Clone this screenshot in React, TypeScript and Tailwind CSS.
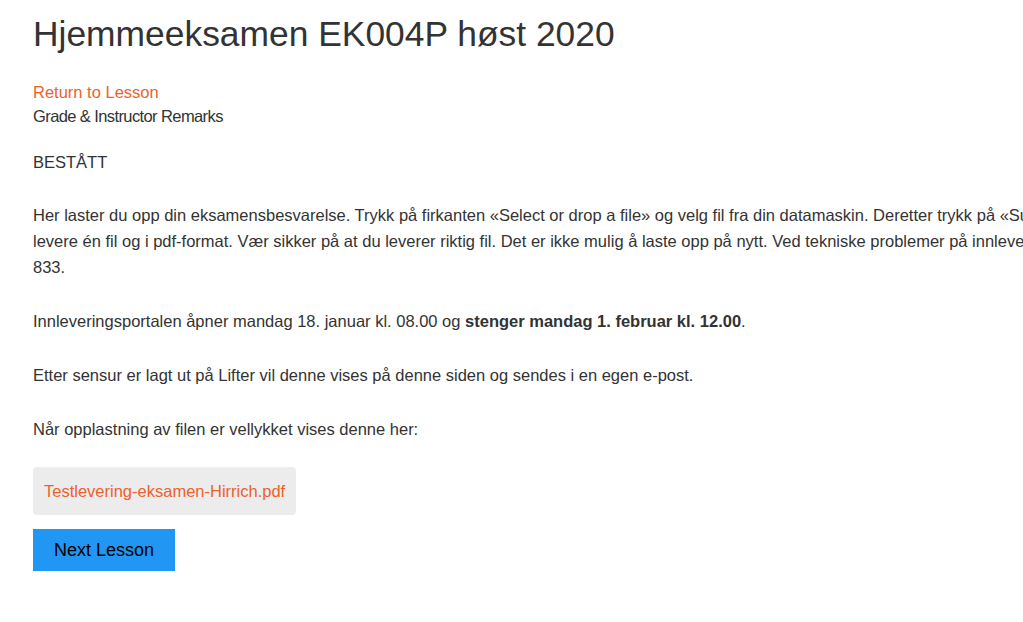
export default function App() {
  return (
    <div className="w-[1023px] h-[622px] overflow-hidden bg-white" style={{ fontFamily: '"Liberation Sans", Arial, sans-serif' }}>
      <div className="w-[1300px] pl-[33px] pt-[12px] text-[#333] text-[16.5px] leading-[26px]">
        <h1 className="text-[35.4px] leading-[44px] text-[#333] font-normal">Hjemmeeksamen EK004P høst 2020</h1>
        <div className="mt-[24px]">
          <a className="text-[#eb622d] block leading-[24px]">Return to Lesson</a>
          <div className="text-[#333] leading-[24px] tracking-[-0.6px]">Grade &amp; Instructor Remarks</div>
        </div>
        <p className="mt-[21px]">BESTÅTT</p>
        <p className="mt-[27px] whitespace-nowrap">
          Her laster du opp din eksamensbesvarelse. Trykk på firkanten «Select or drop a file» og velg fil fra din datamaskin. Deretter trykk på «Submit». Du kan kun
          <br />
          levere én fil og i pdf-format. Vær sikker på at du leverer riktig fil. Det er ikke mulig å laste opp på nytt. Ved tekniske problemer på innlevering, ring 22 00 00
          <br />
          833.
        </p>
        <p className="mt-[28px] whitespace-nowrap">
          Innleveringsportalen åpner mandag 18. januar kl. 08.00 og <strong className="font-bold">stenger mandag 1. februar kl. 12.00</strong>.
        </p>
        <p className="mt-[28px]">Etter sensur er lagt ut på Lifter vil denne vises på denne siden og sendes i en egen e-post.</p>
        <p className="mt-[28px]">Når opplastning av filen er vellykket vises denne her:</p>
        <div className="mt-[25px] inline-flex items-center h-[48px] px-[11px] bg-[#ececec] rounded-[4px] text-[#eb622d]">
          Testlevering-eksamen-Hirrich.pdf
        </div>
        <div>
          <button className="mt-[14px] w-[142px] h-[42px] bg-[#2196f3] text-black text-[18px]">Next Lesson</button>
        </div>
      </div>
    </div>
  );
}
